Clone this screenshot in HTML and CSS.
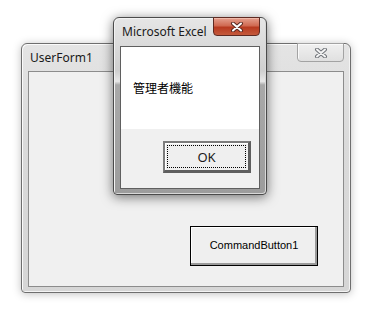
FILE: index.html
```html
<!DOCTYPE html>
<html lang="ja">
<head>
    <meta charset="UTF-8">
    <meta name="viewport" content="width=device-width, initial-scale=1.0">
    <title>UserForm1</title>
    <link rel="stylesheet" href="styles.css">
</head>
<body>
    <div class="desktop">
        <!-- UserForm (inactive, behind) -->
        <div class="window userform">
            <div class="titlebar">
                <span class="title">UserForm1</span>
                <button class="close close-inactive" aria-label="閉じる">
                    <svg width="14" height="10" viewBox="0 0 14 10">
                        <path d="M3 1.5 L11 8.5 M11 1.5 L3 8.5" stroke="#6f7378" stroke-width="4" stroke-linecap="round"/>
                        <path d="M3 1.5 L11 8.5 M11 1.5 L3 8.5" stroke="#f4f4f4" stroke-width="2" stroke-linecap="round"/>
                    </svg>
                </button>
            </div>
            <div class="client form-client">
                <button class="cmd-button">CommandButton1</button>
            </div>
        </div>

        <!-- MsgBox (active, on top) -->
        <div class="window msgbox">
            <div class="titlebar">
                <span class="title">Microsoft Excel</span>
                <button class="close close-active" aria-label="閉じる">
                    <svg width="14" height="10" viewBox="0 0 14 10">
                        <path d="M3 1.5 L11 8.5 M11 1.5 L3 8.5" stroke="#5a2a22" stroke-width="4" stroke-linecap="round"/>
                        <path d="M3 1.5 L11 8.5 M11 1.5 L3 8.5" stroke="#ffffff" stroke-width="2" stroke-linecap="round"/>
                    </svg>
                </button>
            </div>
            <div class="client msg-client">
                <div class="msg-body">管理者機能</div>
                <div class="msg-footer">
                    <button class="ok-button"><span class="focus">OK</span></button>
                </div>
            </div>
        </div>
    </div>
</body>
</html>
```

FILE: styles.css
```css
body {
    margin: 0;
    background: #fff;
    font-family: "Noto Sans", "Noto Sans CJK JP", sans-serif;
    color: #1a1a1a;
}
.desktop {
    position: relative;
    width: 371px;
    height: 311px;
    overflow: hidden;
}
.window {
    position: absolute;
    box-sizing: border-box;
    display: flex;
    flex-direction: column;
    border: 1px solid #6e6e6e;
    border-radius: 6px 6px 4px 4px;
}
.userform {
    left: 21px;
    top: 43px;
    width: 330px;
    height: 250px;
    padding: 0 6px 5px 6px;
    background: linear-gradient(to bottom, #e4e4e4, #dadada 40%, #d6d6d6);
    box-shadow: inset 1px 1px 0 #fafafa, inset -1px -1px 0 #f4f4f4, 0 1px 8px rgba(0, 0, 0, 0.25);
}
.msgbox {
    left: 113px;
    top: 17px;
    width: 154px;
    height: 178px;
    padding: 0 6px 5px 6px;
    border-color: #4a4a4a;
    background: linear-gradient(to bottom, #e6e6e6 0%, #cfcfcf 30%, #e8e8e8 36%, #a9a9a9 38%, #9c9c9c 100%);
    box-shadow: inset 1px 1px 0 #f2f2f2, inset -1px -1px 0 #d8d8d8, 0 2px 12px rgba(0, 0, 0, 0.55);
}
.titlebar {
    height: 27px;
    display: flex;
    align-items: flex-start;
    justify-content: space-between;
    flex-shrink: 0;
}
.msgbox .titlebar {
    height: 28px;
}
.title {
    font-size: 12px;
    line-height: 16px;
    margin-top: 6px;
    margin-left: 2px;
    white-space: nowrap;
}
.msgbox .title {
    margin-top: 6px;
    margin-left: 2px;
}
.close {
    width: 47px;
    height: 19px;
    margin-top: -1px;
    padding: 0;
    display: flex;
    align-items: center;
    justify-content: center;
    border-radius: 0 0 4px 4px;
    cursor: pointer;
}
.close-inactive {
    border: 1px solid #a3a3a3;
    background: linear-gradient(to bottom, #f0f0f0, #e0e0e0);
    box-shadow: inset 1px 1px 0 #fafafa;
}
.close-active {
    border: 1px solid #5e2a22;
    background: linear-gradient(to bottom, #e5a08f 0%, #d06a52 45%, #b83a20 55%, #c45a3c 100%);
    box-shadow: inset 0 1px 0 #f0b8a8;
}
.client {
    flex: 1;
    border: 1px solid #5f5f5f;
    background: #f0f0f0;
}
.form-client {
    border-color: #8c8c8c;
    display: flex;
    align-items: flex-end;
    justify-content: flex-end;
    padding: 0 25px 20px 0;
}
.msg-client {
    display: flex;
    flex-direction: column;
}
.msg-body {
    height: 82px;
    background: #fff;
    font-size: 12px;
    line-height: 16px;
    padding: 34px 0 0 12px;
    box-sizing: border-box;
    color: #000;
}
.msg-footer {
    flex: 1;
    display: flex;
    justify-content: flex-end;
    align-items: flex-start;
    padding: 12px 8px 0 0;
}
.ok-button {
    width: 88px;
    height: 32px;
    padding: 2px;
    background: #efefef;
    border-style: solid;
    border-width: 2px 3px 3px 2px;
    border-color: #7c7c7c #5e5e5e #5e5e5e #7c7c7c;
    box-shadow: inset 1px 1px 0 #fff;
    font-family: "Noto Sans", sans-serif;
    font-size: 13px;
    color: #1a1a1a;
    cursor: pointer;
}
.ok-button .focus {
    display: flex;
    align-items: center;
    justify-content: center;
    height: 100%;
    box-sizing: border-box;
    border: 1px dotted #000;
}
.cmd-button {
    width: 128px;
    height: 40px;
    background: #efefef;
    border: 1px solid #000;
    box-shadow: inset -2px -2px 0 #9a9a9a, inset 1px 1px 0 #fff;
    font-family: "Liberation Sans", Arial, sans-serif;
    font-size: 11px;
    color: #000;
    padding: 0 0 2px 0;
    cursor: pointer;
}
```
